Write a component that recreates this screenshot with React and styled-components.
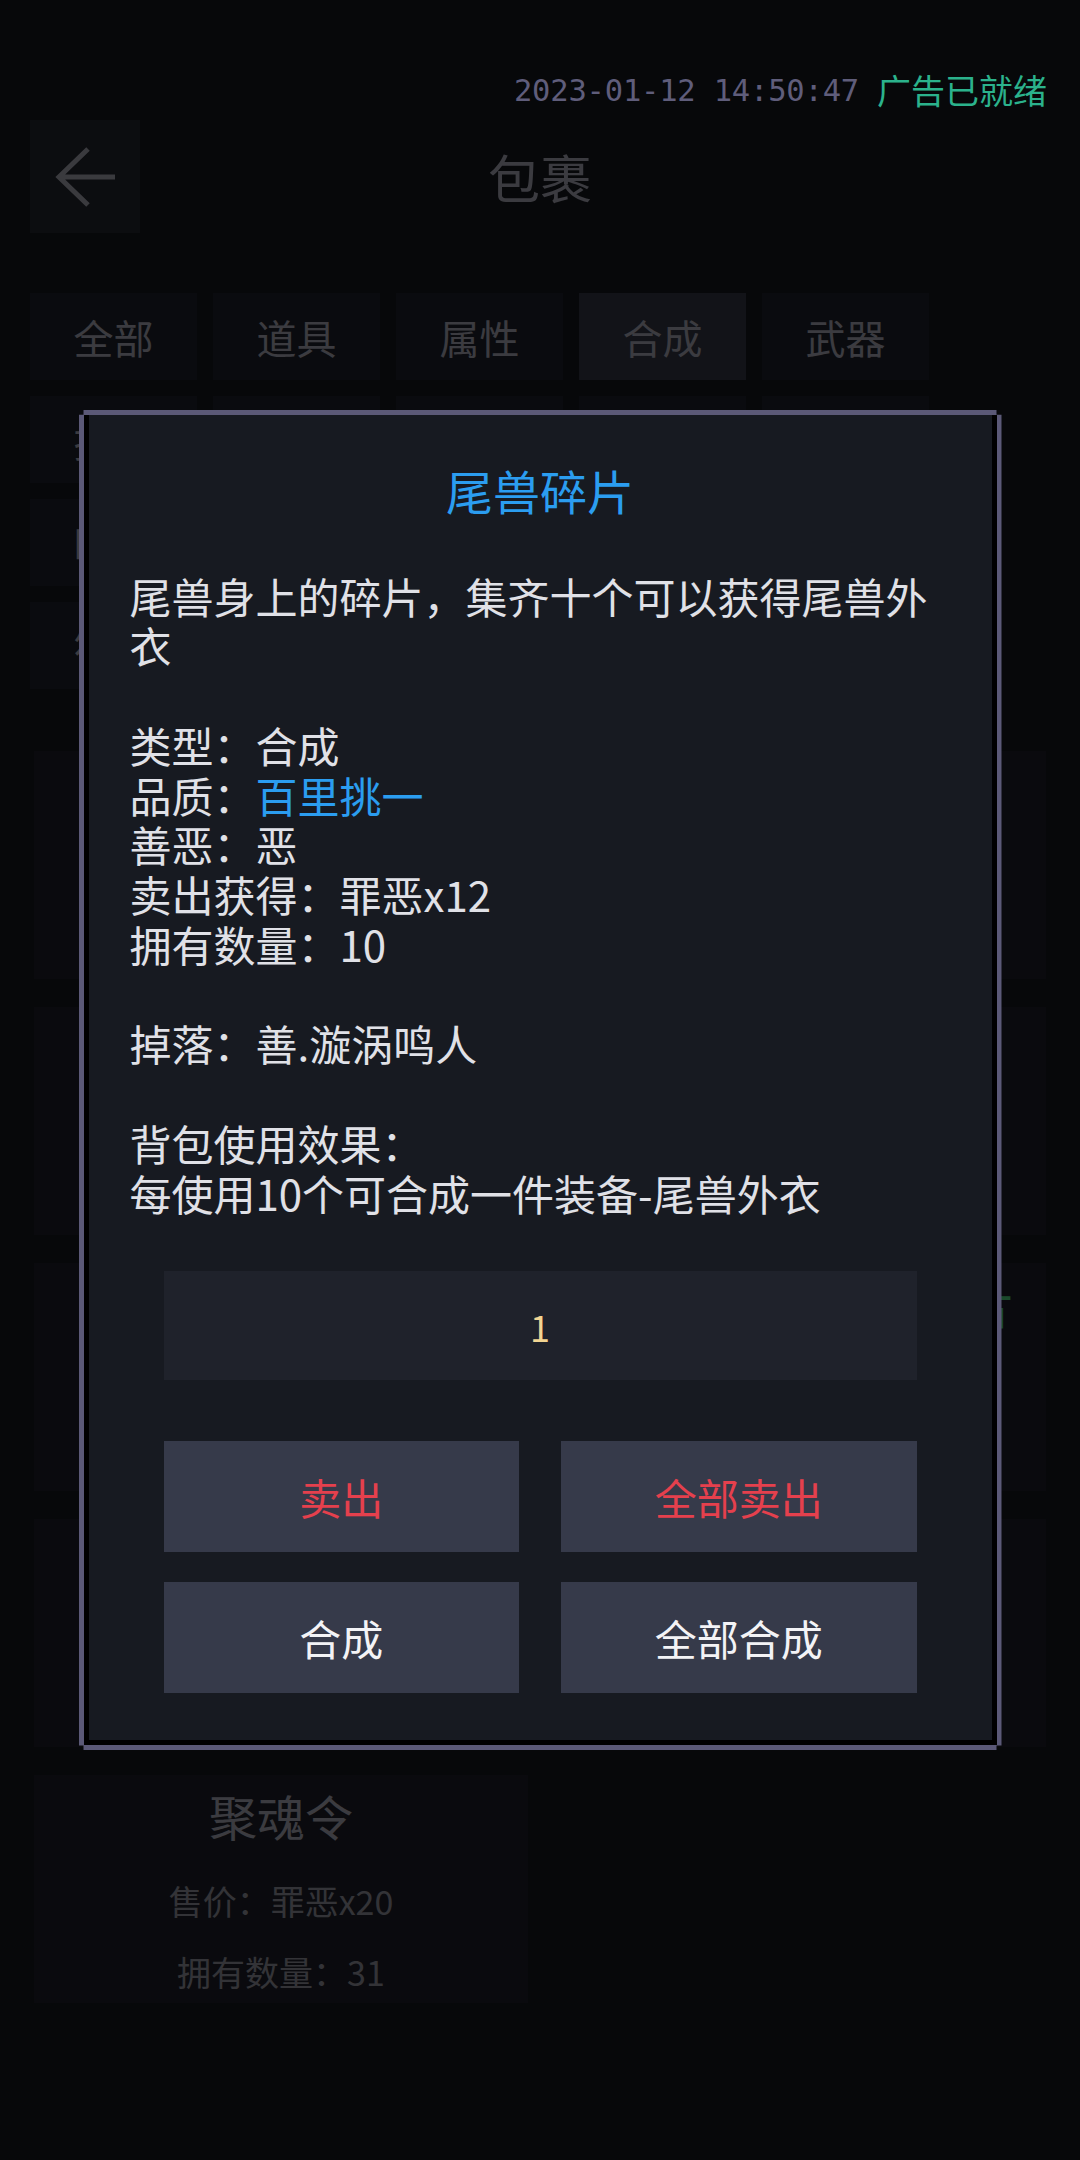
import React from "react";
import styled, { createGlobalStyle } from "styled-components";

const GlobalStyle = createGlobalStyle`
  html, body {
    margin: 0;
    padding: 0;
    background: #07080a;
  }
  body {
    font-family: "Noto Sans CJK SC", "Noto Sans", sans-serif;
  }
  *, *::before, *::after {
    box-sizing: border-box;
  }
`;

const Screen = styled.div`
  position: relative;
  width: 1080px;
  height: 2160px;
  overflow: hidden;
  background: #14171d;
  padding: 70px 30px 0;
`;

const StatusBar = styled.div`
  position: relative;
  z-index: 3;
  display: flex;
  justify-content: flex-end;
  align-items: center;
  gap: 18px;
  height: 40px;
  padding-right: 3px;
`;

const Clock = styled.span`
  font-family: "DejaVu Sans Mono", "Liberation Mono", monospace;
  font-size: 30.5px;
  color: #5f5d7b;
  letter-spacing: -0.2px;
`;

const AdState = styled.span`
  font-size: 34px;
  line-height: 40px;
  color: #2bb28c;
`;

const Header = styled.header`
  display: grid;
  grid-template-columns: 110px 1fr 110px;
  align-items: center;
  height: 113px;
  margin-top: 10px;
`;

const BackButton = styled.button`
  width: 110px;
  height: 113px;
  border: 0;
  padding: 0;
  background: #23252e;
  display: flex;
  align-items: center;
  justify-content: center;
`;

const PageTitle = styled.h1`
  margin: 0;
  text-align: center;
  font-size: 52px;
  line-height: 60px;
  font-weight: 400;
  color: #a9a9b7;
`;

const TabGrid = styled.div`
  display: flex;
  flex-wrap: wrap;
  gap: 16px;
  margin-top: 60px;
`;

const Tab = styled.div`
  width: 167px;
  height: 87px;
  display: flex;
  align-items: center;
  justify-content: center;
  font-size: 40px;
  color: #a9a9b7;
  background: ${(p) => (p.$active ? "#343745" : "#1f222b")};
`;

const ItemGrid = styled.div`
  display: grid;
  grid-template-columns: repeat(2, 1fr);
  column-gap: 24px;
  row-gap: 28px;
  margin: 62px 4px 0;
`;

const ItemCard = styled.div`
  height: 228px;
  background: #1d1f28;
  display: flex;
  flex-direction: column;
  align-items: center;
  padding-top: 12px;
`;

const ItemName = styled.div`
  font-size: 48px;
  line-height: 56px;
  white-space: nowrap;
  color: ${(p) => p.$color};
`;

const MetaList = styled.div`
  display: flex;
  flex-direction: column;
  align-items: center;
  gap: 31px;
  margin-top: 38px;
`;

const Meta = styled.div`
  font-size: 34px;
  line-height: 40px;
  color: #92929e;
`;

const Overlay = styled.div`
  position: absolute;
  inset: 0;
  z-index: 2;
  background: rgba(0, 0, 0, 0.65);
  display: flex;
  align-items: center;
  justify-content: center;
`;

const DialogFrame = styled.div`
  width: 923px;
  border: 5px solid #5b5977;
  clip-path: polygon(
    5px 0, calc(100% - 5px) 0, calc(100% - 5px) 5px, 100% 5px,
    100% calc(100% - 5px), calc(100% - 5px) calc(100% - 5px),
    calc(100% - 5px) 100%, 5px 100%, 5px calc(100% - 5px),
    0 calc(100% - 5px), 0 5px, 5px 5px
  );
`;

const DialogPanel = styled.div`
  background: #171a21;
  border: 5px solid #000;
  border-top: 0;
  padding: 47px 41px 47px 41px;
`;

const DialogTitle = styled.h2`
  margin: 0;
  text-align: center;
  font-size: 47px;
  line-height: 56px;
  font-weight: 400;
  color: #2b9df0;
`;

const Description = styled.p`
  margin: 53px 0 0;
  font-size: 42px;
  line-height: 49.75px;
  color: #e0e1e7;
  white-space: pre-wrap;
`;

const Quality = styled.span`
  color: #2b9df0;
`;

const AmountInput = styled.input`
  display: block;
  width: calc(100% - 68px);
  height: 109px;
  margin: 54px 34px 0;
  border: 0;
  outline: none;
  background: #1f222b;
  text-align: center;
  font-family: "Noto Sans CJK SC", "Noto Sans", sans-serif;
  font-size: 36px;
  color: #f2d592;
`;

const Actions = styled.div`
  display: grid;
  grid-template-columns: 1fr 1fr;
  gap: 30px 42px;
  margin: 61px 34px 0;
`;

const ActionButton = styled.button`
  height: 111px;
  border: 0;
  padding: 0;
  background: #363a4a;
  font-family: "Noto Sans CJK SC", "Noto Sans", sans-serif;
  font-size: 42px;
  color: ${(p) => (p.$danger ? "#e5404d" : "#f3f3f6")};
`;

const tabs = [
  "全部", "道具", "属性", "合成", "武器",
  "技能", "头盔", "衣服", "裤子", "鞋子",
  "时装", "饰品", "宠物", "坐骑", "翅膀",
  "符咒", "丹药", "宝石", "卷轴", "其他",
];

const items = [
  { name: "尾兽碎片", color: "#2b9df0", price: "罪恶x12", count: 10 },
  { name: "晓之袍碎片", color: "#a9a9b7", price: "罪恶x15", count: 4 },
  { name: "查克拉结晶", color: "#a9a9b7", price: "罪恶x8", count: 23 },
  { name: "仙术卷轴残页", color: "#a9a9b7", price: "罪恶x10", count: 6 },
  { name: "封印术残卷", color: "#a9a9b7", price: "罪恶x9", count: 12 },
  { name: "九尾查克拉结晶碎片", color: "#4ed07e", price: "罪恶x30", count: 2 },
  { name: "通灵卷轴", color: "#a9a9b7", price: "罪恶x18", count: 7 },
  { name: "忍具强化石", color: "#a9a9b7", price: "罪恶x5", count: 45 },
  { name: "聚魂令", color: "#a9a9b7", price: "罪恶x20", count: 31 },
];

function BackArrow() {
  return (
    <svg width="62" height="60" viewBox="0 0 62 60" fill="none">
      <path
        d="M34 2 L5 30 L34 58 M5 30 H61"
        stroke="#a6a6b2"
        strokeWidth="5"
        strokeLinejoin="miter"
      />
    </svg>
  );
}

export default function App() {
  return (
    <>
      <GlobalStyle />
      <Screen>
        <StatusBar>
          <Clock>2023-01-12 14:50:47</Clock>
          <AdState>广告已就绪</AdState>
        </StatusBar>

        <Header>
          <BackButton aria-label="返回">
            <BackArrow />
          </BackButton>
          <PageTitle>包裹</PageTitle>
          <span />
        </Header>

        <TabGrid>
          {tabs.map((t) => (
            <Tab key={t} $active={t === "合成"}>
              {t}
            </Tab>
          ))}
        </TabGrid>

        <ItemGrid>
          {items.map((it) => (
            <ItemCard key={it.name}>
              <ItemName $color={it.color}>{it.name}</ItemName>
              <MetaList>
                <Meta>售价：{it.price}</Meta>
                <Meta>拥有数量：{it.count}</Meta>
              </MetaList>
            </ItemCard>
          ))}
        </ItemGrid>

        <Overlay>
          <DialogFrame>
            <DialogPanel>
              <DialogTitle>尾兽碎片</DialogTitle>
              <Description>
                {"尾兽身上的碎片，集齐十个可以获得尾兽外衣\n\n类型：合成\n品质："}
                <Quality>百里挑一</Quality>
                {"\n善恶：恶\n卖出获得：罪恶x12\n拥有数量：10\n\n掉落：善.漩涡鸣人\n\n背包使用效果：\n每使用10个可合成一件装备-尾兽外衣"}
              </Description>
              <AmountInput type="text" readOnly value="1" />
              <Actions>
                <ActionButton $danger>卖出</ActionButton>
                <ActionButton $danger>全部卖出</ActionButton>
                <ActionButton>合成</ActionButton>
                <ActionButton>全部合成</ActionButton>
              </Actions>
            </DialogPanel>
          </DialogFrame>
        </Overlay>
      </Screen>
    </>
  );
}
